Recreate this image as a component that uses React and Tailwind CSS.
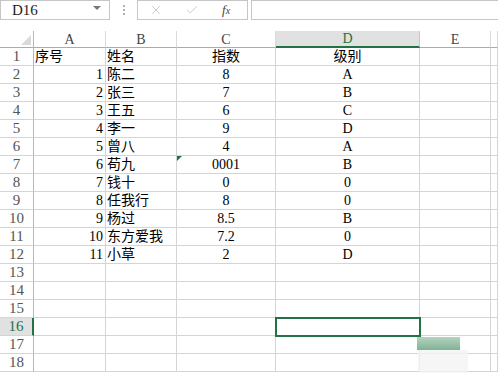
import React from "react";
import { X, Check } from "lucide-react";

// sheet contents, rows 1..12
const data = [
  ["序号", "姓名", "指数", "级别"],
  [1, "陈二", "8", "A"],
  [2, "张三", "7", "B"],
  [3, "王五", "6", "C"],
  [4, "李一", "9", "D"],
  [5, "曾八", "4", "A"],
  [6, "苟九", "0001", "B"],
  [7, "钱十", "0", "0"],
  [8, "任我行", "8", "0"],
  [9, "杨过", "8.5", "B"],
  [10, "东方爱我", "7.2", "0"],
  [11, "小草", "2", "D"],
];

const letters = ["A", "B", "C", "D", "E", ""];
const font = { fontFamily: '"Liberation Serif", "Noto Sans CJK SC", serif' };

const SheetRow = ({ n }) => {
  const row = data[n - 1] || ["", "", "", ""];
  const active = n === 16;
  const base = "h-[18px] border-r border-b border-[#d4d4d4] flex items-center text-[14px] text-black overflow-visible whitespace-nowrap";
  return (
    <>
      <div
        className={`h-[18px] border-b border-[#d4d4d4] flex items-center justify-center text-[15px] ${
          active
            ? "bg-[#e1e1e1] text-[#217346] border-r-2 border-r-[#217346]"
            : "text-[#555] border-r border-r-[#b8b8b8]"
        }`}
      >
        {n}
      </div>
      <div className={`${base} ${n === 1 ? "justify-start pl-[1px]" : "justify-end pr-[2px]"}`}>
        {row[0]}
      </div>
      <div className={`${base} justify-start pl-[1px]`}>{row[1]}</div>
      <div className={`${base} justify-center relative`}>
        {n === 7 && (
          <span className="absolute left-0 top-0 w-0 h-0 border-t-[5px] border-t-[#217346] border-r-[5px] border-r-transparent" />
        )}
        {row[2]}
      </div>
      <div
        className={`${base} justify-center ${
          active ? "outline-2 outline-[#217346] -outline-offset-1 relative z-10" : ""
        }`}
      >
        {row[3]}
      </div>
      <div className={base}></div>
      <div className={base}></div>
    </>
  );
};

export default function App() {
  return (
    <div className="relative w-[498px] h-[373px] overflow-hidden bg-white" style={font}>
      {/* formula bar */}
      <div className="h-[31px] flex items-start">
        <div className="w-[110px] h-[20px] border border-[#c6c6c6] flex items-center justify-between pl-[11px] pr-[8px]">
          <span className="text-[15px] text-[#222]">D16</span>
          <span className="w-0 h-0 border-l-[4px] border-r-[4px] border-t-[4px] border-l-transparent border-r-transparent border-t-[#777] mb-[4px]" />
        </div>
        <div className="w-[27px] h-[20px] flex flex-col items-center justify-center gap-[2px]">
          <span className="w-[2px] h-[2px] bg-[#b0b0b0]" />
          <span className="w-[2px] h-[2px] bg-[#b0b0b0]" />
          <span className="w-[2px] h-[2px] bg-[#b0b0b0]" />
        </div>
        <div className="w-[111px] h-[20px] border border-[#c6c6c6] flex items-center pl-[11px]">
          <X size={14} strokeWidth={1.2} color="#b4b4b4" />
          <Check size={14} strokeWidth={1.2} color="#b4b4b4" className="ml-[22px]" />
          <span
            className="italic text-[13px] text-[#444] ml-[23px]"
            style={{ fontFamily: '"Liberation Serif", serif' }}
          >
            f<span className="text-[10px]">x</span>
          </span>
        </div>
        <div className="flex-1 ml-[3px] h-[20px] border border-[#c6c6c6] border-r-0" />
      </div>

      {/* sheet */}
      <div className="grid grid-cols-[34px_72px_71px_99px_144px_71px_1fr]">
        <div className="h-[17px] border-r border-r-[#b8b8b8] border-b border-b-[#ababab] relative">
          <span className="absolute right-[2px] bottom-[2px] w-0 h-0 border-b-[10px] border-b-[#dadada] border-l-[10px] border-l-transparent" />
        </div>
        {letters.map((l) =>
          l === "D" ? (
            <div
              key={l}
              className="h-[17px] bg-[#e1e1e1] border-r border-r-[#c8c8c8] border-b-2 border-b-[#217346] flex items-center justify-center text-[14px] text-[#217346]"
            >
              {l}
            </div>
          ) : (
            <div
              key={l || "f"}
              className="h-[17px] border-r border-r-[#dadada] border-b border-b-[#ababab] flex items-center justify-center text-[14px] text-[#444]"
            >
              {l}
            </div>
          )
        )}
        {Array.from({ length: 18 }, (_, i) => (
          <SheetRow key={i} n={i + 1} />
        ))}
      </div>

      {/* fill-handle smudge over the bottom right */}
      <div className="absolute left-[417px] top-[337px] w-[43px] h-[13px] bg-gradient-to-b from-[#b5d3bf] to-[#7fb394] z-20" />
      <div className="absolute left-[418px] top-[350px] w-[50px] h-[23px] bg-[#f4f4f5]/80 z-20" />
    </div>
  );
}
